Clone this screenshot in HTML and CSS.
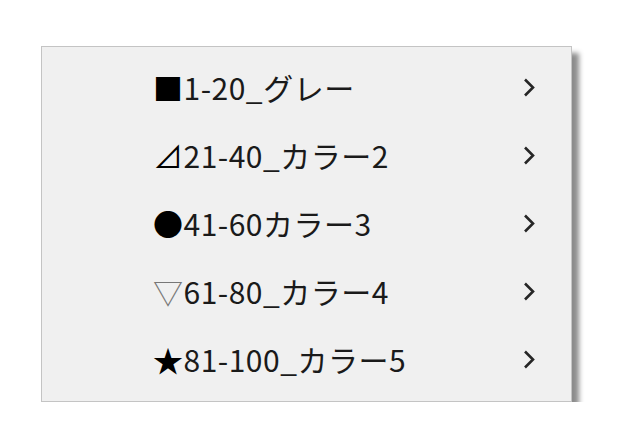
FILE: index.html
```html
<!DOCTYPE html>
<html lang="ja">
<head>
<meta charset="utf-8">
<link rel="stylesheet" href="styles.css">
</head>
<body>
<div class="menu">
  <div class="item"><span class="label"><span class="sym">■</span>1-20_グレー</span><svg class="chev" viewBox="0 0 12 20"><path d="M2 2 L10 10 L2 18"/></svg></div>
  <div class="item"><span class="label"><span class="sym">⊿</span>21-40_カラー2</span><svg class="chev" viewBox="0 0 12 20"><path d="M2 2 L10 10 L2 18"/></svg></div>
  <div class="item"><span class="label"><span class="sym">●</span>41-60カラー3</span><svg class="chev" viewBox="0 0 12 20"><path d="M2 2 L10 10 L2 18"/></svg></div>
  <div class="item"><span class="label"><span class="sym light">▽</span>61-80_カラー4</span><svg class="chev" viewBox="0 0 12 20"><path d="M2 2 L10 10 L2 18"/></svg></div>
  <div class="item"><span class="label"><span class="sym">★</span>81-100_カラー5</span><svg class="chev" viewBox="0 0 12 20"><path d="M2 2 L10 10 L2 18"/></svg></div>
</div>
</body>
</html>
```
FILE: styles.css
```css
html, body {
  margin: 0;
  padding: 0;
  background: #ffffff;
}
body {
  padding: 46px 0 0 41px;
  font-family: "Noto Sans CJK JP", "Noto Sans", sans-serif;
}
.menu {
  box-sizing: border-box;
  width: 531px;
  background: #f0f0f0;
  border: 1px solid #c4c4c4;
  padding: 6px 0 8px 0;
  box-shadow: 7px 7px 5px rgba(0, 0, 0, 0.45);
}
.item {
  height: 68px;
  display: flex;
  align-items: center;
  justify-content: space-between;
  padding: 0 36px 0 111px;
}
.label {
  font-size: 30px;
  color: #1a1a1a;
  line-height: 1;
  letter-spacing: 0.5px;
}
.sym {
  color: #000;
}
.sym.light {
  color: #777;
}
.chev {
  width: 12px;
  height: 21px;
  fill: none;
  stroke: #262626;
  stroke-width: 2.6;
}
```
